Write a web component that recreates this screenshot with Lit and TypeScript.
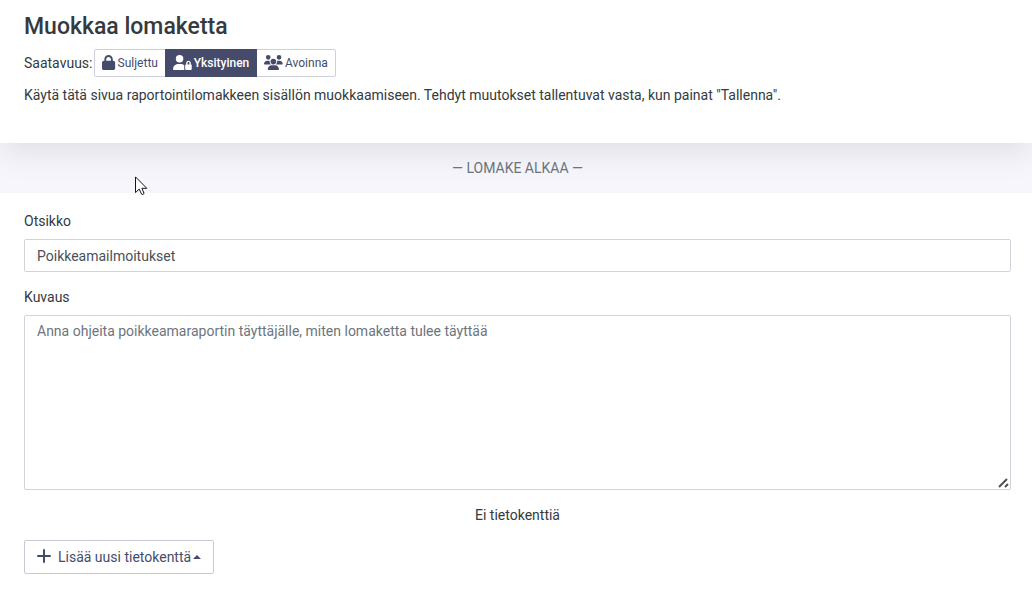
import { LitElement, html, svg, css } from "lit";
import { customElement, state } from "lit/decorators.js";

interface Access {
  id: string;
  label: string;
  viewBox: string;
  path: string;
}

const ACCESS: Access[] = [
  {
    id: "closed",
    label: "Suljettu",
    viewBox: "0 0 448 512",
    path: "M144 144v48H304V144c0-44.2-35.8-80-80-80s-80 35.8-80 80zM80 192V144C80 64.5 144.5 0 224 0s144 64.5 144 144v48h16c35.3 0 64 28.7 64 64V448c0 35.3-28.7 64-64 64H64c-35.3 0-64-28.7-64-64V256c0-35.3 28.7-64 64-64H80z",
  },
  {
    id: "private",
    label: "Yksityinen",
    viewBox: "0 0 640 512",
    path: "M224 256A128 128 0 1 0 224 0a128 128 0 1 0 0 256zm-45.7 48C79.8 304 0 383.8 0 482.3C0 498.7 13.3 512 29.7 512H392.6c-5.4-9.4-8.6-20.3-8.6-32V352c0-2.1 .1-4.2 .3-6.3c-31-26-71-41.7-114.6-41.7H178.3zM528 240c17.7 0 32 14.3 32 32v48H496V272c0-17.7 14.3-32 32-32zm-80 32v48c-17.7 0-32 14.3-32 32V480c0 17.7 14.3 32 32 32H608c17.7 0 32-14.3 32-32V352c0-17.7-14.3-32-32-32V272c0-44.2-35.8-80-80-80s-80 35.8-80 80z",
  },
  {
    id: "open",
    label: "Avoinna",
    viewBox: "0 0 640 512",
    path: "M144 0a80 80 0 1 1 0 160A80 80 0 1 1 144 0zM512 0a80 80 0 1 1 0 160A80 80 0 1 1 512 0zM0 298.7C0 239.8 47.8 192 106.7 192h42.7c15.9 0 31 3.5 44.6 9.7c-1.3 7.2-1.9 14.7-1.9 22.3c0 38.2 16.8 72.5 43.3 96c-.2 0-.4 0-.7 0H21.3C9.6 320 0 310.4 0 298.7zM405.3 320c-.2 0-.4 0-.7 0c26.6-23.5 43.3-57.8 43.3-96c0-7.6-.7-15-1.9-22.3c13.6-6.3 28.7-9.7 44.6-9.7h42.7C592.2 192 640 239.8 640 298.7c0 11.8-9.6 21.3-21.3 21.3H405.3zM224 224a96 96 0 1 1 192 0 96 96 0 1 1 -192 0zM128 485.3C128 411.7 187.7 352 261.3 352H378.7C452.3 352 512 411.7 512 485.3c0 14.7-11.9 26.7-26.7 26.7H154.7c-14.7 0-26.7-11.9-26.7-26.7z",
  },
];

@customElement("app-root")
export class AppRoot extends LitElement {
  @state() private access = "private";

  static styles = css`
    :host {
      display: block;
      font-family: Roboto, "Liberation Sans", sans-serif;
      font-size: 14px;
      line-height: 21px;
      color: #343a40;
      background: #fff;
    }
    * {
      box-sizing: border-box;
    }
    button,
    input,
    textarea {
      font: inherit;
      margin: 0;
    }
    .head {
      position: relative;
      padding: 12px 24px 37px;
      background: #fff;
      box-shadow: 0 8px 32px rgba(0, 0, 0, 0.1);
    }
    h1 {
      margin: 0 0 7px;
      font-size: 23px;
      line-height: 30px;
      font-weight: 500;
    }
    .access {
      display: flex;
      align-items: center;
      gap: 2px;
      margin-bottom: 8px;
    }
    .group {
      display: flex;
    }
    .group button {
      display: flex;
      align-items: center;
      gap: 2px;
      height: 28px;
      padding: 0 7px;
      border: 1px solid #ced0dc;
      background: #fff;
      color: #464b6b;
      font-size: 12px;
      line-height: 18px;
    }
    .group button + button {
      margin-left: -1px;
    }
    .group button:first-child {
      border-radius: 2px 0 0 2px;
    }
    .group button:last-child {
      border-radius: 0 2px 2px 0;
    }
    .group button.on {
      position: relative;
      background: #464b6b;
      border-color: #464b6b;
      color: #fff;
      font-weight: 500;
    }
    .group svg {
      height: 15px;
      margin-bottom: 2px;
      fill: currentColor;
    }
    p {
      margin: 0;
    }
    .band {
      padding: 15px 21px 14px 24px;
      text-align: center;
      color: #6c757d;
      background: #f7f6fc;
    }
    .form {
      position: relative;
      background: #fff;
      padding: 18px 21px 22px 24px;
    }
    label {
      display: block;
      margin-bottom: 7px;
    }
    input,
    textarea {
      display: block;
      width: 100%;
      padding: 5px 12px;
      border: 1px solid #ced4da;
      border-radius: 2px;
      color: #495057;
      background: #fff;
      outline: none;
    }
    input {
      height: 33px;
      margin-bottom: 15px;
    }
    textarea {
      height: 175px;
      resize: vertical;
    }
    textarea::placeholder {
      color: #6c757d;
      opacity: 1;
    }
    textarea::-webkit-resizer {
      background: url("data:image/svg+xml,%3Csvg xmlns='http://www.w3.org/2000/svg' width='15' height='15'%3E%3Cpath d='M4 13L12 5M10 13L13 10' stroke='%23505050' stroke-width='2'/%3E%3C/svg%3E")
        no-repeat right bottom;
    }
    .empty {
      margin: 15px 0 14px;
      text-align: center;
    }
    .add {
      display: flex;
      align-items: center;
      height: 34px;
      padding: 0 12px;
      border: 1px solid #c8c9d3;
      border-radius: 2px;
      background: #fff;
      color: #464b6b;
    }
    .add .plus {
      width: 14px;
      height: 14px;
      margin: 0 7px 2px 0;
    }
    .add .caret {
      width: 8px;
      height: 4px;
      margin-left: 2px;
    }
    .pointer {
      position: absolute;
      left: 135px;
      top: 176px;
      width: 13px;
      height: 20px;
      pointer-events: none;
    }
  `;

  private option(a: Access) {
    const on = a.id === this.access;
    return html`<button
      type="button"
      class=${on ? "on" : ""}
      aria-pressed=${on ? "true" : "false"}
      @click=${() => (this.access = a.id)}
    >
      <svg viewBox=${a.viewBox} aria-hidden="true">${svg`<path d=${a.path} />`}</svg>
      <span>${a.label}</span>
    </button>`;
  }

  render() {
    return html`
      <header class="head">
        <h1>Muokkaa lomaketta</h1>
        <div class="access">
          <span id="access-label">Saatavuus:</span>
          <div class="group" role="group" aria-labelledby="access-label">
            ${ACCESS.map((a) => this.option(a))}
          </div>
        </div>
        <p>
          Käytä tätä sivua raportointilomakkeen sisällön muokkaamiseen. Tehdyt
          muutokset tallentuvat vasta, kun painat "Tallenna".
        </p>
      </header>
      <div class="band">— LOMAKE ALKAA —</div>
      <main class="form">
        <label for="title">Otsikko</label>
        <input id="title" type="text" value="Poikkeamailmoitukset" />
        <label for="description">Kuvaus</label>
        <textarea
          id="description"
          placeholder="Anna ohjeita poikkeamaraportin täyttäjälle, miten lomaketta tulee täyttää"
        ></textarea>
        <p class="empty">Ei tietokenttiä</p>
        <button type="button" class="add" aria-haspopup="true">
          <svg class="plus" viewBox="0 0 14 14" aria-hidden="true">
            <path d="M7 1V13M1 7H13" stroke="currentColor" stroke-width="2" stroke-linecap="round" />
          </svg>
          <span>Lisää uusi tietokenttä</span>
          <svg class="caret" viewBox="0 0 8 4" aria-hidden="true">
            <path d="M0 4L4 0L8 4Z" fill="currentColor" />
          </svg>
        </button>
      </main>
      <svg class="pointer" viewBox="0 0 13 20" aria-hidden="true">
        <path
          d="M.5 .9V16.6L4.2 13.1L6.6 18.2Q7.8 19 9.1 17.5L6.9 12.3H11.8Z"
          fill="#fff"
          stroke="#15151f"
          stroke-width="1"
        />
      </svg>
    `;
  }
}
